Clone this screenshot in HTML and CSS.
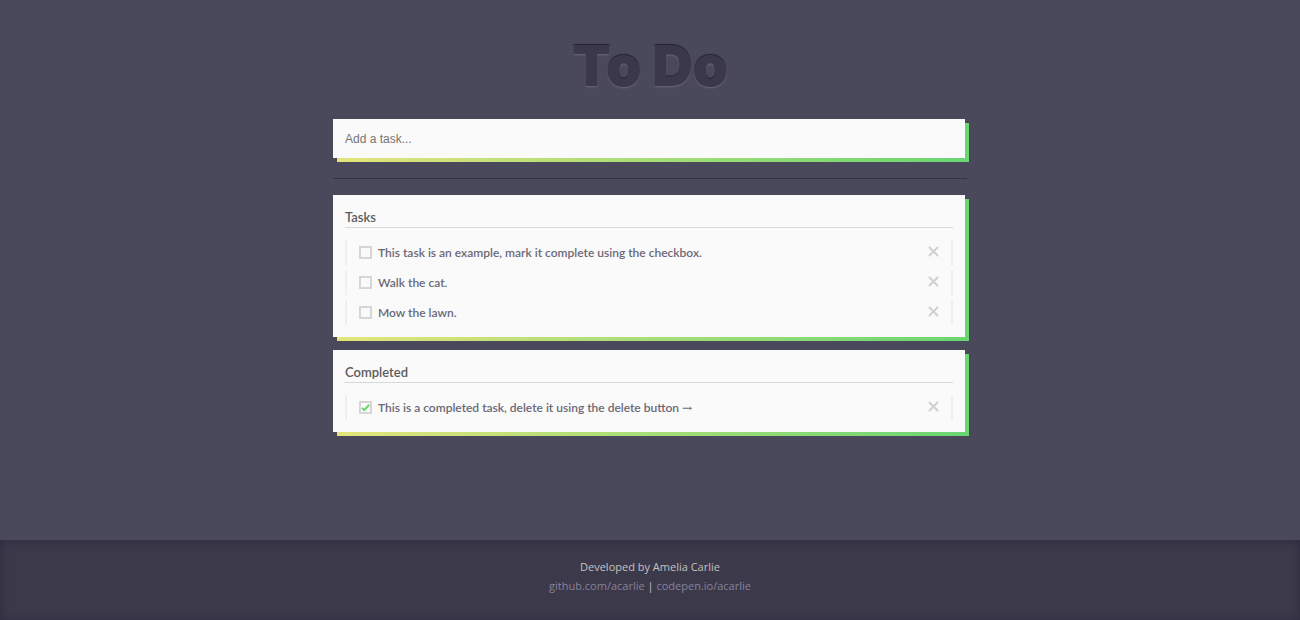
FILE: index.html
```html
<!DOCTYPE html>
<html lang="en">
<head>
<meta charset="utf-8">
<meta name="viewport" content="width=device-width, initial-scale=1">
<title>To Do</title>
<link rel="stylesheet" href="styles.css">
</head>
<body>
<main class="app">
  <h1 class="title">To Do</h1>
  <form class="card entry">
    <input class="entry-input" type="text" placeholder="Add a task..." aria-label="Add a task">
  </form>
  <hr class="divider">
  <section class="card">
    <h2 class="card-title">Tasks</h2>
    <ul class="list">
      <li class="item">
        <label class="task"><input class="check" type="checkbox"><span>This task is an example, mark it complete using the checkbox.</span></label>
        <button class="delete" type="button" aria-label="Delete task"><svg class="cross" viewBox="0 0 11 11"><path d="M1 1l9 9M10 1l-9 9"/></svg></button>
      </li>
      <li class="item">
        <label class="task"><input class="check" type="checkbox"><span>Walk the cat.</span></label>
        <button class="delete" type="button" aria-label="Delete task"><svg class="cross" viewBox="0 0 11 11"><path d="M1 1l9 9M10 1l-9 9"/></svg></button>
      </li>
      <li class="item">
        <label class="task"><input class="check" type="checkbox"><span>Mow the lawn.</span></label>
        <button class="delete" type="button" aria-label="Delete task"><svg class="cross" viewBox="0 0 11 11"><path d="M1 1l9 9M10 1l-9 9"/></svg></button>
      </li>
    </ul>
  </section>
  <section class="card">
    <h2 class="card-title">Completed</h2>
    <ul class="list">
      <li class="item">
        <label class="task"><span class="check-wrap"><input class="check" type="checkbox" checked><svg class="tick" viewBox="0 0 13 13"><path d="M3 6.9l2.3 2.1 4.9-5.2"/></svg></span><span>This is a completed task, delete it using the delete button <span class="arrow">→</span></span></label>
        <button class="delete" type="button" aria-label="Delete task"><svg class="cross" viewBox="0 0 11 11"><path d="M1 1l9 9M10 1l-9 9"/></svg></button>
      </li>
    </ul>
  </section>
</main>
<footer class="footer">
  <p class="credit">Developed by Amelia Carlie</p>
  <p class="credit"><a class="link" href="https://github.com/acarlie">github.com/acarlie</a> | <a class="link" href="https://codepen.io/acarlie">codepen.io/acarlie</a></p>
</footer>
</body>
</html>
```
FILE: styles.css
```css
* {
  box-sizing: border-box;
}

body {
  display: flex;
  flex-direction: column;
  min-height: 100vh;
  margin: 0;
  background: #4a485b;
  color: #6a6877;
  font-family: Lato, "Liberation Sans", sans-serif;
}

.app {
  flex: 1;
  width: 100%;
  max-width: 634px;
  margin: 0 auto;
  padding: 31px 0 32px;
}

.title {
  margin: 0 0 18px;
  color: #3a384a;
  font-family: Inter, Roboto, sans-serif;
  font-size: 56px;
  font-weight: 900;
  line-height: 70px;
  text-align: center;
  text-shadow: 0 -1px 1px #232133, 0 1px 2px #6b697c;
}

.card {
  position: relative;
  z-index: 0;
  margin: 0 2px 13px 0;
  padding: 12px;
  background: #fafafa;
}

.card::before {
  content: "";
  position: absolute;
  z-index: -1;
  inset: 4px -4px -4px 4px;
  background: linear-gradient(to right, #e4e47c, #69d672);
  clip-path: polygon(0 calc(100% - 4px), calc(100% - 4px) calc(100% - 4px), calc(100% - 4px) 0, 100% 0, 100% 100%, 0 100%);
}

.entry {
  margin-bottom: 0;
  padding: 0;
}

.entry-input {
  display: block;
  width: 100%;
  height: 39px;
  padding: 0 12px;
  border: 0;
  background: transparent;
  color: #555;
  font-family: "Liberation Sans", Arial, sans-serif;
  font-size: 12px;
}

.entry-input::placeholder {
  color: #757575;
}

.divider {
  height: 1px;
  margin: 20px 0 16px;
  border: 0;
  background: #343244;
}

.card-title {
  margin: 0 0 12px;
  border-bottom: 1px solid #d8d8d8;
  color: #5c5c5c;
  font-size: 13px;
  font-weight: 600;
  line-height: 20px;
}

.list {
  display: grid;
  gap: 5px;
  margin: 0;
  padding: 0;
  list-style: none;
}

.item {
  display: flex;
  align-items: center;
  justify-content: space-between;
  min-height: 25px;
  padding: 0 12px;
  border: solid #efefef;
  border-width: 0 2px;
}

.task {
  display: flex;
  align-items: center;
  gap: 6px;
  font-size: 12px;
  font-weight: 600;
  line-height: 18px;
}

.arrow {
  font-family: "DejaVu Serif", serif;
  font-weight: 400;
}

.check {
  flex: none;
  display: block;
  width: 13px;
  height: 13px;
  margin: 0;
  border: 2px solid #d6d6d6;
  appearance: none;
}

.check-wrap {
  position: relative;
}

.tick {
  position: absolute;
  inset: 0;
  width: 13px;
  height: 13px;
  fill: none;
  stroke: #69d86f;
  stroke-width: 2;
}

.delete {
  display: flex;
  padding: 0 0 2px;
  border: 0;
  background: none;
}

.cross {
  width: 11px;
  height: 11px;
  stroke: #d0d0d0;
  stroke-width: 2;
}

.footer {
  padding: 17px 12px 25px;
  background: #3c394b;
  box-shadow: inset 0 1px 10px #2d2b3c;
  color: #c4c2c0;
  font-family: "Open Sans", "Noto Sans", sans-serif;
  font-size: 11px;
  line-height: 19px;
  text-align: center;
}

.credit {
  margin: 0;
}

.link {
  color: #85829a;
  text-decoration: none;
}
```
